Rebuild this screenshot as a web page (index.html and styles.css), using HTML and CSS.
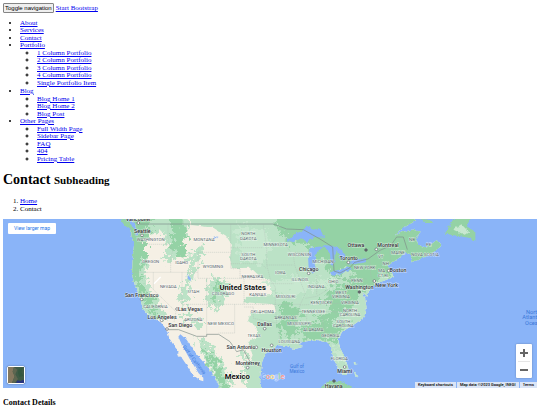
FILE: index.html
```html
<!DOCTYPE html>
<html lang="en">
<head>
    <meta charset="UTF-8">
    <meta name="viewport" content="width=device-width, initial-scale=1.0">
    <title>Contact - Start Bootstrap</title>
    <link rel="stylesheet" href="styles.css">
</head>
<body>
    <nav>
        <div class="navbar-header">
            <button type="button" class="navbar-toggle">Toggle navigation</button>
            <a href="#">Start Bootstrap</a>
        </div>
        <ul class="menu">
            <li><a href="#">About</a></li>
            <li><a href="#">Services</a></li>
            <li><a href="#">Contact</a></li>
            <li><a href="#">Portfolio</a>
                <ul class="submenu">
                    <li><a href="#">1 Column Portfolio</a></li>
                    <li><a href="#">2 Column Portfolio</a></li>
                    <li><a href="#">3 Column Portfolio</a></li>
                    <li><a href="#">4 Column Portfolio</a></li>
                    <li><a href="#">Single Portfolio Item</a></li>
                </ul>
            </li>
            <li><a href="#">Blog</a>
                <ul class="submenu">
                    <li><a href="#">Blog Home 1</a></li>
                    <li><a href="#">Blog Home 2</a></li>
                    <li><a href="#">Blog Post</a></li>
                </ul>
            </li>
            <li><a href="#">Other Pages</a>
                <ul class="submenu">
                    <li><a href="#">Full Width Page</a></li>
                    <li><a href="#">Sidebar Page</a></li>
                    <li><a href="#">FAQ</a></li>
                    <li><a href="#">404</a></li>
                    <li><a href="#">Pricing Table</a></li>
                </ul>
            </li>
        </ul>
    </nav>

    <h1 class="page-header">Contact <small>Subheading</small></h1>
    <ol class="breadcrumb">
        <li><a href="#">Home</a></li>
        <li>Contact</li>
    </ol>

    <div class="map">
        <svg class="map-canvas" viewBox="-351 12 1602 507" preserveAspectRatio="xMidYMid slice" role="img" aria-label="Map of the United States">
            <defs>
                <filter id="rough" x="-5%" y="-5%" width="110%" height="110%" color-interpolation-filters="sRGB">
                    <feTurbulence type="fractalNoise" baseFrequency="0.09" numOctaves="3" seed="4" result="n"/>
                    <feDisplacementMap in="SourceGraphic" in2="n" scale="10" xChannelSelector="R" yChannelSelector="G"/>
                </filter>
                <filter id="rougher" x="-10%" y="-10%" width="120%" height="120%" color-interpolation-filters="sRGB">
                    <feTurbulence type="fractalNoise" baseFrequency="0.07" numOctaves="4" seed="9" result="n"/>
                    <feDisplacementMap in="SourceGraphic" in2="n" scale="60" xChannelSelector="R" yChannelSelector="G"/>
                </filter>
                <path id="coast" d="M28 0L50 36L58 50L50 62L46 45L34 42L34 60L42 90L38 130L36 180L45 212L60 250L68 280L88 304L122 322L140 345L148 370L162 392L176 410L171 420L186 430L200 450L216 478L240 496L250 499L250 488L236 475L222 452L208 430L198 412L185 388L175 365L181 358L200 374L216 400L240 430L266 460L286 490L306 530L424 530L420 490L425 450L432 424L450 408L475 391L500 393L525 402L548 396L536 384L560 379L590 375L622 382L636 402L640 432L654 456L668 480L682 480L685 460L676 430L660 398L655 375L666 350L700 330L735 305L740 280L735 250L728 232L742 245L748 224L765 207L795 196L822 186L806 166L806 150L832 132L856 114L870 120L876 140L896 134L934 116L964 92L950 76L920 98L894 90L886 68L902 50L878 44L846 52L824 62L850 38L886 18L890 0Z"/>
                <clipPath id="land"><use href="#coast"/></clipPath>
            </defs>
            <rect class="sea" x="-1200" y="-400" width="3400" height="1400"/>
            <g filter="url(#rough)">
                <use href="#coast" class="desert"/>
                <g clip-path="url(#land)">
                    <path class="plains" d="M205 -40L214 30L280 38L318 62L336 90L330 130L336 160L392 158L424 188L452 198L456 240L380 246L372 262L462 268L468 290L392 294L384 318L410 336L412 366L384 382L398 420L386 450L405 560L1040 560L1040 -40Z"/>
                    <g filter="url(#rougher)">
                        <path class="plains" d="M-20 -40H215L206 54L178 112L142 144L120 110L100 60L82 80L86 160L76 190L94 220L120 266L140 310L120 320L80 300L0 200Z"/>
                        <path class="forest" d="M-40 -40H110L92 44L80 70L76 130L62 170L70 220L98 262L112 292L104 300L74 262L44 210L-10 160Z"/>
                        <path class="desert" d="M78 62L104 52L136 60L142 100L128 134L100 160L78 140Z"/>
                        <path class="forest" d="M140 -40H182L196 40L204 76L190 90L198 118L180 130L166 108L146 110L158 70Z"/>
                        <path class="plains" d="M212 110L250 90L246 120L236 148L222 166L212 210L206 190Z"/>
                        <path class="plains" d="M268 196L316 186L326 236L310 262L290 292L268 278L258 236Z"/>
                        <path class="forest" d="M284 210L300 204L296 246L286 258Z"/>
                        <path class="plains" d="M188 206L200 180L214 226L192 272L176 240Z"/>
                        <path class="plains" d="M184 288L222 300L250 332L232 336L196 310Z"/>
                        <path class="plains" d="M230 370L250 376L284 398L304 440L330 490L340 560H300L270 460L246 420Z"/>
                        <path class="forest" d="M244 392L264 404L296 450L318 496L326 560H308L284 470Z"/>
                        <path class="plains" d="M366 406L396 430L400 480L420 490L410 560H380L370 470Z"/>
                        <path class="forest" d="M462 -40H1040V160L860 150L800 180L750 210L720 240L700 270L650 310L620 330L580 300L600 262L640 220L700 190L676 160L644 190L618 160L570 96L520 80L478 60Z"/>
                        <path class="forest" d="M480 262L520 270L546 300L526 330L538 360L500 372L478 330Z"/>
                        <path class="forest" d="M538 340L590 322L650 330L690 322L660 348L648 380L600 374L560 378Z"/>
                        <path class="plains" d="M572 274L620 266L640 286L590 304Z"/>
                        <path class="meadow" d="M418 200L470 196L540 190L580 220L530 246L470 238Z"/>
                        <path class="meadow" d="M350 30L440 44L450 90L430 150L360 130Z"/>
                        <path class="meadow" d="M580 200L640 182L660 190L620 220Z"/>
                        <path class="meadow" d="M640 398L668 410L676 448L652 440Z"/>
                    </g>
                </g>
                <path class="forest" d="M-4 4L20 12L34 30L48 48L34 46L12 30Z"/>
                <path class="forest" d="M975 56L1000 12L1052 8L1040 34L1066 50L1066 78L1046 68L1020 64Z"/>
                <path class="meadow" d="M1000 44L1024 28L1048 52L1036 60Z"/>
                <path class="forest" d="M904 12L928 14L940 24L918 24ZM912 86L934 92L928 98Z"/>
                <path class="forest" d="M612 508L630 496L662 498L690 512L712 522H604Z"/>
                <path class="meadow" d="M698 462L706 474L716 488L706 484ZM700 442L712 448L704 450Z"/>
                <path class="sea" d="M500 78L530 54L548 48L560 32L580 44L600 40L616 68L584 66L560 80L544 70L522 80Z"/>
                <path class="sea" d="M570 100L584 96L612 94L600 104L588 118L584 150L590 164L578 176L566 158L564 124Z"/>
                <path class="sea" d="M610 90L634 92L666 102L680 130L664 134L650 108L644 120L642 152L632 150L630 116Z"/>
                <path class="sea" d="M630 172L656 164L690 156L694 162L660 178L636 182Z"/>
                <path class="sea" d="M682 144L704 134L740 130L736 142L702 148Z"/>
                <path class="sea" d="M202 180L212 188L212 198L204 192ZM278 70L296 62L286 72Z"/>
            </g>
            <path class="salt" d="M102 206L122 186"/>
            <g class="country">
                <path d="M60 27H460L500 42L550 44L600 72L638 96L642 168L660 174L690 158L704 142L744 132L780 106L812 92L830 66L850 66L862 104"/>
                <path d="M142 344L176 344L230 364H260V358H296L330 380L350 410L370 404L390 440L424 454"/>
            </g>
            <g class="state">
                <path d="M52 80L80 88H144M144 28V80L158 108L152 130V172M40 172H234M100 172V224L168 290L162 322M186 172V268M234 112V190H260M186 268H466M260 190V364M260 190H372V268M234 112H332M332 28V160M332 98H430M332 146H424L440 162M332 160H360V190H372L450 196M344 268V354H296M372 276H400V310L470 324M430 28L440 98V150L452 196L466 216V268L470 324L478 344V390M440 150H520M500 40L494 88L520 120L524 150L540 196L556 236L540 270L526 330L524 370M452 206H520M466 268H540M524 112H566M532 166H566M590 180V240M646 180L630 220L590 244L556 250M646 192H740M540 270L720 262M540 290H660L720 290M560 296V378M604 296L616 366M616 366H650M640 290L690 326M690 176V192M750 134L752 180L760 206M780 106L786 180M808 94L812 140"/>
            </g>
            <g class="pin">
                <circle cx="55" cy="24" r="4"/><circle cx="66" cy="61" r="4"/><circle cx="65" cy="253" r="4"/><circle cx="171" cy="282" r="4"/>
                <circle cx="125" cy="316" r="4"/><circle cx="141" cy="342" r="4"/><circle cx="434" cy="341" r="4"/><circle cx="409" cy="397" r="4"/>
                <circle cx="455" cy="391" r="4"/><circle cx="383" cy="458" r="4"/><circle cx="566" cy="175" r="4"/><circle cx="685" cy="142" r="4"/>
                <circle cx="769" cy="103" r="4"/><circle cx="806" cy="167" r="4"/><circle cx="763" cy="198" r="4"/><circle cx="674" cy="456" r="4"/>
                <circle class="capital" cx="738" cy="105" r="4"/><circle class="capital" cx="718" cy="231" r="4"/><circle class="capital" cx="642" cy="498" r="4"/>
            </g>
            <g class="state-name">
                <text x="92" y="77">WASHINGTON</text>
                <text x="252" y="78">MONTANA</text>
                <text x="385" y="61">NORTH</text><text x="385" y="74">DAKOTA</text>
                <text x="385" y="122">SOUTH</text><text x="385" y="135">DAKOTA</text>
                <text x="467" y="93">MINNESOTA</text>
                <text x="92" y="143">OREGON</text>
                <text x="185" y="148">IDAHO</text>
                <text x="279" y="158">WYOMING</text>
                <text x="538" y="124">WISCONSIN</text>
                <text x="609" y="143">MICHIGAN</text>
                <text x="397" y="188">NEBRASKA</text>
                <text x="481" y="178">IOWA</text>
                <text x="540" y="197">ILLINOIS</text>
                <text x="588" y="219">INDIANA</text>
                <text x="640" y="205">OHIO</text>
                <text x="711" y="200">PENN</text>
                <text x="734" y="161">NEW YORK</text>
                <text x="145" y="220">NEVADA</text>
                <text x="221" y="233">UTAH</text>
                <text x="309" y="241">COLORADO</text>
                <text x="413" y="244">KANSAS</text>
                <text x="497" y="248">MISSOURI</text>
                <text x="663" y="237">WEST</text><text x="663" y="250">VIRGINIA</text>
                <text x="604" y="268">KENTUCKY</text>
                <text x="690" y="268">VIRGINIA</text>
                <text x="106" y="279">CALIFORNIA</text>
                <text x="220" y="318">ARIZONA</text>
                <text x="302" y="329">NEW MEXICO</text>
                <text x="427" y="294">OKLAHOMA</text>
                <text x="497" y="312">ARKANSAS</text>
                <text x="580" y="294">TENNESSEE</text>
                <text x="690" y="290">NORTH</text><text x="690" y="303">CAROLINA</text>
                <text x="670" y="324">SOUTH</text><text x="670" y="337">CAROLINA</text>
                <text x="538" y="330">MISSISSIPPI</text>
                <text x="580" y="349">ALABAMA</text>
                <text x="631" y="365">GEORGIA</text>
                <text x="402" y="366">TEXAS</text>
                <text x="508" y="385">LOUISIANA</text>
                <text x="658" y="435">FLORIDA</text>
                <text x="876" y="78">NB</text>
                <text x="926" y="94">PE</text>
                <text x="834" y="118">MAINE</text>
                <text x="915" y="124">NOVA SCOTIA</text>
                <text x="782" y="130">VT</text>
                <text x="797" y="150">NH</text>
                <text x="785" y="170">MA</text>
                <text x="789" y="186">CT RI</text>
            </g>
            <g class="city">
                <text x="55" y="17">Vancouver</text>
                <text x="67" y="53">Seattle</text>
                <text x="65" y="245">San Francisco</text>
                <text x="211" y="287">Las Vegas</text>
                <text x="126" y="311">Los Angeles</text>
                <text x="181" y="335">San Diego</text>
                <text x="434" y="333">Dallas</text>
                <text x="363" y="402">San Antonio</text>
                <text x="455" y="410">Houston</text>
                <text x="383" y="449">Monterrey</text>
                <text x="566" y="168">Chicago</text>
                <text x="708" y="97">Ottawa</text>
                <text x="804" y="95">Montreal</text>
                <text x="686" y="134">Toronto</text>
                <text x="834" y="171">Boston</text>
                <text x="800" y="216">New York</text>
                <text x="718" y="223">Washington</text>
                <text x="674" y="475">Miami</text>
                <text x="641" y="518">Havana</text>
            </g>
            <g class="nation">
                <text x="368" y="224">United States</text>
                <text x="352" y="493">Mexico</text>
            </g>
            <g class="water-name">
                <text x="531" y="459">Gulf of</text>
                <text x="531" y="474">Mexico</text>
                <text x="223" y="439" transform="rotate(53 223 434)">Gulf of California</text>
                <g class="ocean-name">
                    <text x="1218" y="297">North</text>
                    <text x="1207" y="313">Atlantic</text>
                    <text x="1215" y="329">Ocean</text>
                </g>
            </g>
            <text class="brand" x="423" y="492"><tspan fill="#6fa0f5">G</tspan><tspan fill="#f28b82">o</tspan><tspan fill="#fdd663">o</tspan><tspan fill="#9cc0ff">g</tspan><tspan fill="#81c995">l</tspan><tspan fill="#f28b82">e</tspan></text>
        </svg>

        <a class="larger-map" href="#">View larger map</a>
        <button type="button" class="satellite" aria-label="Show satellite imagery">
            <svg viewBox="0 0 48 48" preserveAspectRatio="none">
                <rect width="48" height="48" fill="#3f5b46"/>
                <path d="M0 0H18L14 14L20 28L12 48H0Z" fill="#85785f"/>
                <path d="M18 0L28 8L22 22L30 36L20 48H12L20 28L14 14Z" fill="#5d6650"/>
                <path d="M32 6L44 2L40 16L46 26L34 30L30 18Z" fill="#34583f"/>
                <path d="M24 48L28 40L38 42L44 38L48 40V48Z" fill="#28347d"/>
            </svg>
        </button>
        <div class="zoom">
            <button type="button" aria-label="Zoom in"><svg viewBox="0 0 10 10"><path d="M1 5H9M5 1V9"/></svg></button>
            <button type="button" aria-label="Zoom out"><svg viewBox="0 0 10 10"><path d="M1 5H9"/></svg></button>
        </div>
        <div class="credits">
            <button type="button">Keyboard shortcuts</button>
            <span>Map data ©2023 Google, INEGI</span>
            <a href="#">Terms</a>
        </div>
    </div>

    <h3 class="details">Contact Details</h3>
</body>
</html>
```
FILE: styles.css
```css
body{
    margin: 3px;
    font-family: "Liberation Serif", serif;
    font-size: 7px;
    line-height: 8px;
    color: #000;
    background: #fff;
}
a{
    color: #0000ee;
}
.navbar-header{
    display: flex;
    align-items: center;
    gap: 2px;
}
.navbar-toggle{
    padding: 0 1px;
    border: 1px solid #858585;
    border-radius: 1px;
    background: #efefef;
    font-family: "Liberation Sans", sans-serif;
    font-size: 6px;
    line-height: 8px;
    color: #000;
}
.menu{
    margin: 6px 0 0;
    padding-left: 17px;
}
.submenu{
    margin: 0;
    padding-left: 17px;
    list-style: circle;
}
/* every second row is a little tighter */
.menu li:nth-child(odd){
    line-height: 8px;
}
.menu li:nth-child(even){
    line-height: 7px;
}
.page-header{
    margin: 9px 0;
    font-size: 14px;
    line-height: 16px;
}
.page-header small{
    font-size: 11px;
}
.breadcrumb{
    margin: 0 0 6px;
    padding-left: 17px;
}

/* map */
.map{
    position: relative;
    height: 169px;
    overflow: hidden;
    background: #8ab4f8;
    font-family: Roboto, sans-serif;
}
.map-canvas{
    display: block;
    width: 100%;
    height: 100%;
}
.sea{
    fill: #8ab4f8;
}
.desert{
    fill: #f5f0e5;
}
.plains{
    fill: #bbe2c6;
}
.meadow{
    fill: #c8e8d0;
}
.forest{
    fill: #94d2a5;
}
.salt{
    stroke: #fff;
    stroke-width: 4;
}
.country{
    fill: none;
    stroke: #7d8c88;
    stroke-width: 2;
}
.state{
    fill: none;
    stroke: #a9b5af;
    stroke-width: 1;
    stroke-dasharray: 4 2;
}
.pin{
    fill: #fff;
    stroke: #5f6368;
    stroke-width: 2;
}
.capital{
    fill: #5f6368;
}
.map-canvas text{
    text-anchor: middle;
    paint-order: stroke;
    stroke: rgba(255, 255, 255, 0.6);
    stroke-width: 3;
}
.state-name{
    font-size: 13px;
    fill: #55656a;
}
.city{
    font-size: 16px;
    font-weight: 500;
    fill: #303336;
}
.nation{
    font-size: 23px;
    font-weight: 700;
    fill: #111;
}
.map-canvas .water-name text{
    stroke: none;
}
.water-name{
    font-size: 14px;
    fill: #3b78d8;
}
.ocean-name{
    font-size: 17px;
}
.map-canvas .ocean-name text{
    text-anchor: start;
}
.map-canvas .brand{
    font-size: 22px;
    font-weight: 500;
    text-anchor: start;
    stroke: #e8f0fe;
    stroke-width: 2;
}

/* controls over the map */
.larger-map{
    position: absolute;
    top: 4px;
    left: 5px;
    padding: 0 6px;
    background: #fff;
    border-radius: 1px;
    font-size: 5px;
    line-height: 11px;
    color: #1a73e8;
    text-decoration: none;
}
.satellite{
    position: absolute;
    left: 4px;
    bottom: 4px;
    width: 18px;
    height: 18px;
    padding: 0;
    border: 1px solid #fff;
    border-radius: 2px;
    background: #3f5b46;
    box-shadow: 0 0 2px rgba(0, 0, 0, 0.4);
}
.satellite svg{
    display: block;
    width: 100%;
    height: 100%;
}
.zoom{
    position: absolute;
    right: 5px;
    bottom: 10px;
    display: flex;
    flex-direction: column;
    background: #fff;
    border-radius: 1px;
    box-shadow: 0 0 2px rgba(0, 0, 0, 0.3);
}
.zoom button{
    display: flex;
    align-items: center;
    justify-content: center;
    width: 16px;
    height: 17px;
    padding: 0;
    border: 0;
    background: none;
}
.zoom button + button::before{
    content: "";
    position: absolute;
    top: 17px;
    left: 2px;
    right: 2px;
    border-top: 1px solid #e6e6e6;
}
.zoom svg{
    width: 10px;
    height: 10px;
    fill: none;
    stroke: #666;
    stroke-width: 2;
}
.credits{
    position: absolute;
    right: 0;
    bottom: 0;
    display: flex;
    gap: 1px;
    font-size: 4px;
    font-weight: 500;
    line-height: 6px;
    color: #000;
}
.credits > *{
    padding: 0 3px;
    border: 0;
    background: rgba(245, 245, 245, 0.75);
    font: inherit;
    color: inherit;
    text-decoration: none;
}

.details{
    margin: 10px 0 8px;
    font-size: 8px;
    line-height: 9px;
}
```
